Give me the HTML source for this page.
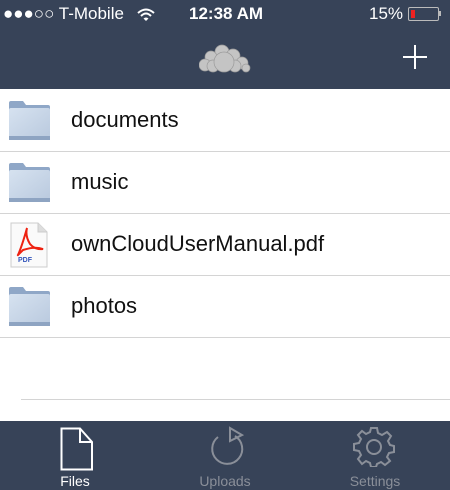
<!DOCTYPE html>
<html><head><style>
body{margin:0;width:450px;height:490px;overflow:hidden;background:#fff;font-family:"Liberation Sans",sans-serif;position:relative}
.hdr{position:absolute;left:0;top:0;width:450px;height:89px;background:#374358;color:#fff}
.sb{position:absolute;top:4px;font-size:17px}
.row{position:absolute;left:0;width:450px;height:61px;border-bottom:1px solid #d4d4d4}
.row span{position:absolute;left:71px;top:17px;font-size:22px;color:#111}
.ic{position:absolute;left:8px;top:10px}
.tab{position:absolute;left:0;top:421px;width:450px;height:69px;background:#374358}
.tl{position:absolute;top:52px;font-size:14px;width:150px;text-align:center}
</style></head><body>
<div class="hdr">
<div class="sb" style="left:3px">●●●○○ T-Mobile</div>
<svg style="position:absolute;left:137px;top:8px" width="18" height="14" viewBox="0 0 18 14"><path d="M1 5 Q9 -2 17 5" stroke="#fff" stroke-width="2" fill="none"/><path d="M4 8 Q9 3 14 8" stroke="#fff" stroke-width="2" fill="none"/><path d="M9 13 L6.5 10.5 Q9 8.5 11.5 10.5Z" fill="#fff"/></svg>
<div class="sb" style="left:189px;font-weight:bold">12:38 AM</div>
<div class="sb" style="left:369px">15%</div>
<div style="position:absolute;left:408px;top:7px;width:29px;height:12px;border:1px solid #bbb;border-radius:2px"><div style="margin:2px;width:4px;height:8px;background:#e22"></div></div>
<div style="position:absolute;left:439px;top:11px;width:2px;height:5px;background:#bbb"></div>
<svg style="position:absolute;left:199px;top:44px" width="52" height="29" viewBox="0 0 52 29">
<g fill="#c4c4c4" stroke="#9a9a9a" stroke-width="0.7"><circle cx="23" cy="8" r="7"/><circle cx="12" cy="13" r="6"/><circle cx="34" cy="12" r="7"/><circle cx="6" cy="21" r="6"/><circle cx="43" cy="19" r="6"/><circle cx="47" cy="24" r="4"/><circle cx="14" cy="22" r="6"/><circle cx="36" cy="22" r="6"/><circle cx="25" cy="18" r="10"/></g></svg>
<div style="position:absolute;left:403px;top:56px;width:24px;height:2px;background:#fff"></div>
<div style="position:absolute;left:414px;top:45px;width:2px;height:24px;background:#fff"></div>
</div>
<div class="row" style="top:90px"><svg class="ic" width="43" height="41"><defs><linearGradient id="g" x1="0" y1="0" x2="1" y2="1"><stop offset="0" stop-color="#d6e2f0"/><stop offset="1" stop-color="#b9c9de"/></linearGradient></defs><path d="M1 3 Q1 1 3 1 H15 L18 5 H40 Q42 5 42 7 V38 Q42 40 40 40 H3 Q1 40 1 38Z" fill="#8fa7c7"/><rect x="1" y="8" width="41" height="32" rx="2" fill="url(#g)"/><rect x="1" y="36" width="41" height="4" fill="#8ea4c2"/></svg><span>documents</span></div>
<div class="row" style="top:152px"><svg class="ic" width="43" height="41"><path d="M1 3 Q1 1 3 1 H15 L18 5 H40 Q42 5 42 7 V38 Q42 40 40 40 H3 Q1 40 1 38Z" fill="#8fa7c7"/><rect x="1" y="8" width="41" height="32" rx="2" fill="url(#g)"/><rect x="1" y="36" width="41" height="4" fill="#8ea4c2"/></svg><span>music</span></div>
<div class="row" style="top:214px"><svg class="ic" style="left:10px;top:8px" width="38" height="46"><path d="M1 1 H28 L37 10 V45 H1Z" fill="#fafafa" stroke="#ccc"/><path d="M28 1 V10 H37" fill="#ddd" stroke="#ccc"/><path d="M17 6 Q15 14 20 22 Q25 28 33 27 Q25 24 13 28 Q7 34 8 33 Q12 24 17 6" fill="none" stroke="#e21" stroke-width="2"/><text x="8" y="40" font-size="7" fill="#3355bb" font-weight="bold" font-family="Liberation Sans">PDF</text></svg><span>ownCloudUserManual.pdf</span></div>
<div class="row" style="top:276px"><svg class="ic" width="43" height="41"><path d="M1 3 Q1 1 3 1 H15 L18 5 H40 Q42 5 42 7 V38 Q42 40 40 40 H3 Q1 40 1 38Z" fill="#8fa7c7"/><rect x="1" y="8" width="41" height="32" rx="2" fill="url(#g)"/><rect x="1" y="36" width="41" height="4" fill="#8ea4c2"/></svg><span>photos</span></div>
<div style="position:absolute;left:21px;top:399px;width:429px;height:1px;background:#d4d4d4"></div>
<div class="tab">
<svg style="position:absolute;left:60px;top:6px" width="34" height="44"><path d="M1.5 1.5 H20 L32 15 V42.5 H1.5Z M20 1.5 V15 H32" fill="none" stroke="#fff" stroke-width="2"/></svg>
<svg style="position:absolute;left:205px;top:5px" width="40" height="42"><path d="M13 11 A15 15 0 1 0 30 10" fill="none" stroke="#8a8f99" stroke-width="2"/><path d="M25 2 L37 9 L25 15Z" fill="none" stroke="#8a8f99" stroke-width="2"/></svg>
<svg style="position:absolute;left:352px;top:6px" width="44" height="40" viewBox="-22 -20 44 40"><g fill="none" stroke="#8a8f99" stroke-width="2"><path d="M-3 -19 H3 L4 -14 L8 -12 L13 -15 L17 -11 L14 -6 L16 -2 L20 -1 V5 L15 6 L13 10 L16 14 L11 18 L7 15 L3 17 L2 20 H-3 L-4 16 L-8 14 L-12 17 L-16 12 L-13 8 L-15 4 L-20 3 V-3 L-15 -4 L-13 -8 L-16 -12 L-12 -16 L-8 -13 L-4 -15Z"/><circle r="7"/></g></svg>
<div class="tl" style="left:0;color:#fff">Files</div>
<div class="tl" style="left:150px;color:#8a8f99">Uploads</div>
<div class="tl" style="left:300px;color:#8a8f99">Settings</div>
</div>
</body></html>
